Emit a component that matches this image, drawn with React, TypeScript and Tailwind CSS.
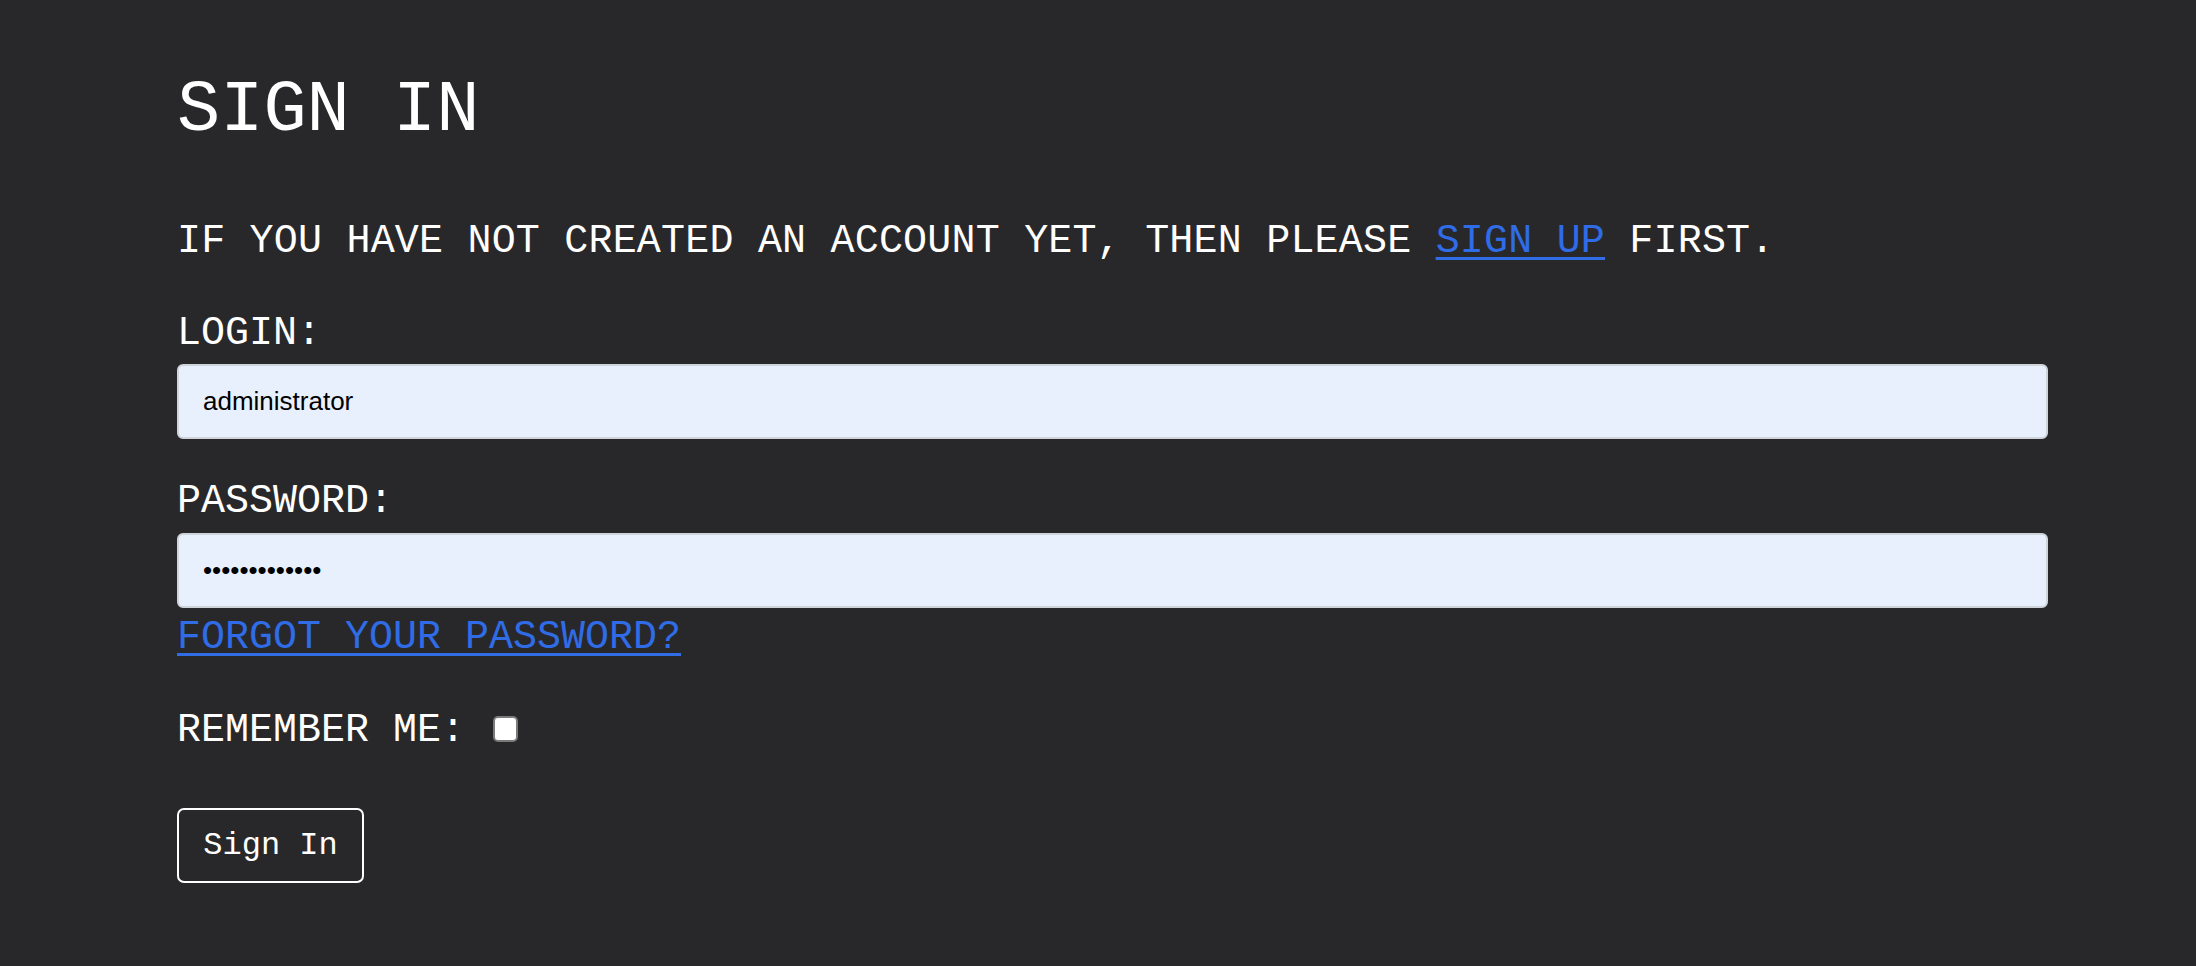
export default function App() {
  return (
    <div className="min-h-screen bg-[#28282b] text-white font-['Liberation_Mono','Courier_New',monospace]">
      <div className="ml-[177px] w-[1871px] pt-[75px] pb-[80px]">
        <h1 className="text-[72px] leading-[72px] font-normal">SIGN IN</h1>

        <p className="mt-[75px] text-[40px] leading-[40px] tracking-[0.2px]">
          IF YOU HAVE NOT CREATED AN ACCOUNT YET, THEN PLEASE{" "}
          <a href="#" className="text-[#2f6ce6] underline decoration-[3px] underline-offset-[5px]">
            SIGN UP
          </a>{" "}
          FIRST.
        </p>

        <form className="flex flex-col" onSubmit={(e) => e.preventDefault()}>
          <label htmlFor="login" className="mt-[52px] block text-[40px] leading-[40px]">
            LOGIN:
          </label>
          <input
            id="login"
            type="text"
            defaultValue="administrator"
            className="mt-[10px] h-[75px] w-full rounded-[6px] border-2 border-[#cfd3da] bg-[#e8f0fe] px-[24px] font-['Liberation_Sans',Arial,sans-serif] text-[26px] text-black outline-none"
          />

          <label htmlFor="password" className="mt-[43px] block text-[40px] leading-[40px]">
            PASSWORD:
          </label>
          <input
            id="password"
            type="password"
            defaultValue="administrator"
            className="mt-[11px] h-[75px] w-full rounded-[6px] border-2 border-[#cfd3da] bg-[#e8f0fe] px-[24px] font-['Liberation_Sans',Arial,sans-serif] text-[26px] text-black outline-none"
          />
          <div className="mt-[10px] text-[40px] leading-[40px]">
            <a href="#" className="text-[#2f6ce6] underline decoration-[3px] underline-offset-[5px]">
              FORGOT YOUR PASSWORD?
            </a>
          </div>

          <div className="mt-[53px] flex items-center text-[40px] leading-[40px]">
            <label htmlFor="remember">REMEMBER ME:</label>
            <input
              id="remember"
              type="checkbox"
              className="ml-[28px] mt-[-4px] h-[26px] w-[25px] shrink-0 appearance-none rounded-[5px] border-2 border-[#7a7a7a] bg-white"
            />
          </div>

          <div className="mt-[57px]">
            <button
              type="submit"
              className="h-[75px] w-[187px] rounded-[7px] border-2 border-white bg-transparent text-[32px] leading-none text-white"
            >
              Sign In
            </button>
          </div>
        </form>
      </div>
    </div>
  );
}
